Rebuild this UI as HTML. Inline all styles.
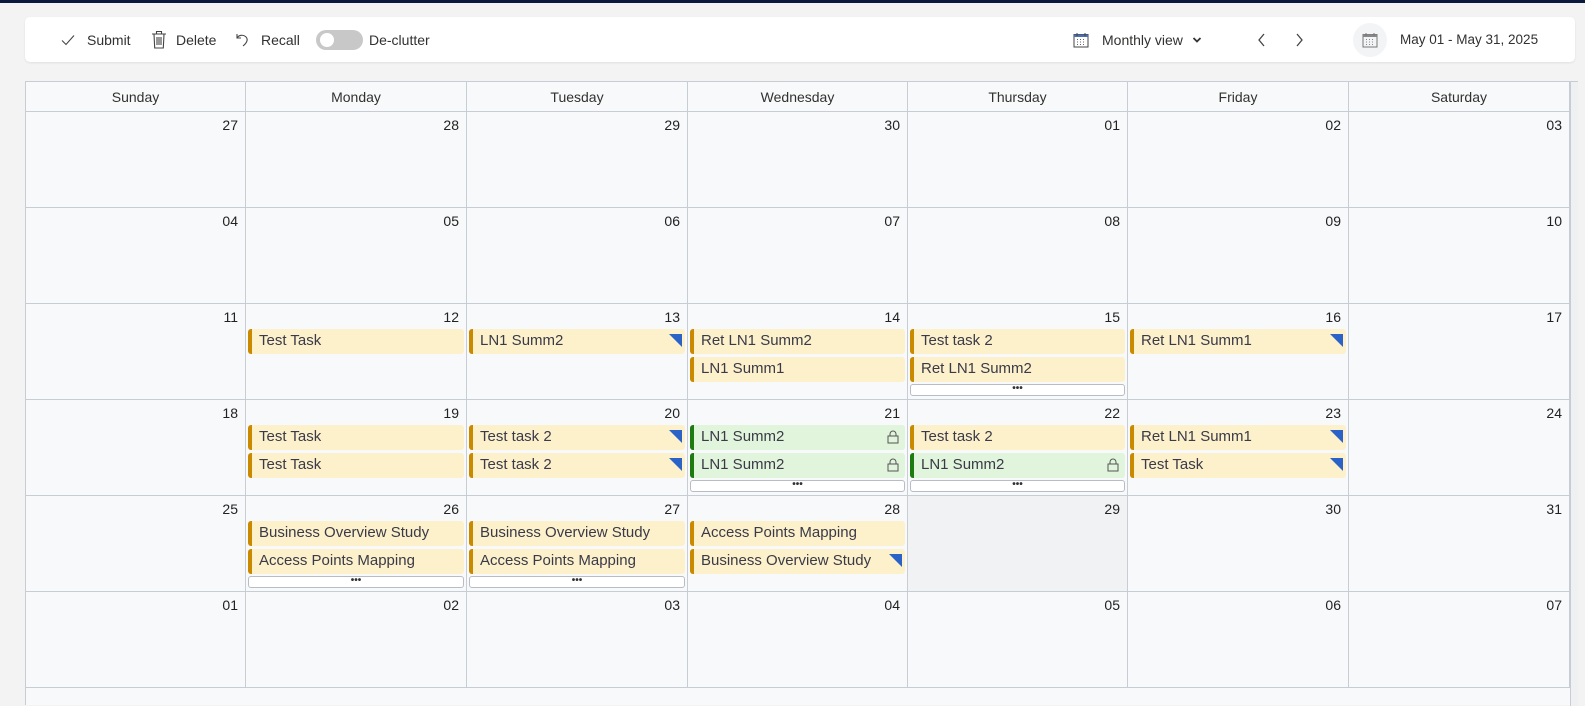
<!DOCTYPE html>
<html><head><meta charset="utf-8"><style>
*{box-sizing:border-box;margin:0;padding:0}
body{width:1585px;height:705px;background:#f3f3f3;font-family:"Liberation Sans",sans-serif;color:#323130;position:relative;overflow:hidden}
.topbar{position:absolute;left:0;top:0;width:1585px;height:3px;background:#0b1a3c}
.tb{position:absolute;left:25px;top:17px;width:1550px;height:45px;background:#fff;border-radius:5px;box-shadow:0 1px 2px rgba(0,0,0,.08)}
.ti{position:absolute;top:0;height:45px;display:flex;align-items:center;font-size:14px;color:#323130}
.grid{position:absolute;left:25px;top:81px;width:1553px;height:624px;border:1px solid #c8ccd4;border-bottom:none;background:#f8f9fb}
.sb{position:absolute;left:1544px;top:0;width:8px;height:624px;background:#eff0f2;border-left:1px solid #c8ccd4}
.hd{position:absolute;top:0;height:30px;border-right:1px solid #c8ccd4;border-bottom:1px solid #c8ccd4;font-size:14px;text-align:center;line-height:30px;background:#f8f9fb}
.cell{position:absolute;border-right:1px solid #c8ccd4;border-bottom:1px solid #c8ccd4;background:#f8f9fb}
.num{position:absolute;right:7px;top:5px;font-size:14px;color:#222}
.ev{position:absolute;left:2px;right:2px;height:25px;background:#fdf1cc;border-left:4px solid #c98a00;border-radius:3px;font-size:15px;line-height:24px;padding-left:7px;color:#3a3a48;overflow:hidden;white-space:nowrap}
.ev.g{background:#e1f4dc;border-left-color:#1e7b10}
.tri{position:absolute;right:3px;top:5px;width:0;height:0;border-top:13px solid #2a62c8;border-left:13px solid transparent}
.lock{position:absolute;right:6px;top:5px}
.more{position:absolute;left:2px;right:2px;height:12px;background:#fff;border:1px solid #b8bcc4;border-radius:3px;font-size:10px;line-height:8px;text-align:center;color:#333;font-weight:bold}
</style></head><body>
<div class="topbar"></div>
<div class="tb">
 <div class="ti" style="left:35px"><svg width="16" height="16" viewBox="0 0 16 16"><path d="M2 8.5l4 4 8-9" fill="none" stroke="#444" stroke-width="1.1"/></svg><span style="margin-left:11px">Submit</span></div>
 <div class="ti" style="left:126px"><svg width="16" height="20" viewBox="0 0 16 20"><path d="M1 4h14M5.5 4V1.5h5V4M3 4l.7 14h8.6L13 4M6 7v8M8 7v8M10 7v8" fill="none" stroke="#444" stroke-width="1.1"/></svg><span style="margin-left:9px">Delete</span></div>
 <div class="ti" style="left:211px"><svg width="14" height="16" viewBox="0 0 14 16"><path d="M1 2v4h4M1.5 5.5C3 3 7 2.5 9.5 4.5S12 10 7 14" fill="none" stroke="#444" stroke-width="1.1"/></svg><span style="margin-left:11px">Recall</span></div>
 <div class="ti" style="left:291px"><div style="width:47px;height:20px;border-radius:10px;background:#c8c8c8;position:relative"><div style="position:absolute;left:4px;top:3px;width:14px;height:14px;border-radius:50%;background:#fff"></div></div><span style="margin-left:6px">De-clutter</span></div>
 <div class="ti" style="left:1048px"><svg width="16" height="16" viewBox="0 0 16 16"><rect x="1" y="2.5" width="14" height="12.5" fill="none" stroke="#444"/><rect x="1" y="2.5" width="14" height="2.5" fill="#4a6fb5"/><path d="M4 1v3M12 1v3" stroke="#444"/><path d="M4 7.5h1M7 7.5h1M10 7.5h1M4 10h1M7 10h1M10 10h1M4 12.5h1M7 12.5h1M10 12.5h1" stroke="#666"/></svg><span style="margin-left:13px">Monthly view</span><svg style="margin-left:9px" width="10" height="8" viewBox="0 0 10 8"><path d="M1.5 2l3.5 3.5L8.5 2" fill="none" stroke="#333" stroke-width="1.8"/></svg></div>
 <div class="ti" style="left:1232px"><svg width="10" height="14" viewBox="0 0 10 14"><path d="M7 1L2 7l5 6" fill="none" stroke="#444" stroke-width="1.3"/></svg></div>
 <div class="ti" style="left:1269px"><svg width="10" height="14" viewBox="0 0 10 14"><path d="M3 1l5 6-5 6" fill="none" stroke="#444" stroke-width="1.3"/></svg></div>
 <div style="position:absolute;left:1328px;top:6px;width:34px;height:34px;border-radius:50%;background:#f3f4f6"></div>
 <div class="ti" style="left:1337px"><svg width="16" height="16" viewBox="0 0 16 16"><rect x="1" y="2.5" width="14" height="12.5" fill="none" stroke="#777"/><rect x="1" y="2.5" width="14" height="2.5" fill="#888"/><path d="M4 1v3M12 1v3" stroke="#777"/><path d="M4 7.5h1M7 7.5h1M10 7.5h1M4 10h1M7 10h1M10 10h1M4 12.5h1M7 12.5h1M10 12.5h1" stroke="#888"/></svg></div>
 <div class="ti" style="left:1375px;font-size:13.5px">May 01 - May 31, 2025</div>
</div>
<div class="grid" id="g"></div>
<script>
var g=document.getElementById('g');
var xs=[0,220,441,662,882,1102,1323,1544];
var days=['Sunday','Monday','Tuesday','Wednesday','Thursday','Friday','Saturday'];
var h='<div class="sb"></div>';
for(var i=0;i<7;i++)h+='<div class="hd" style="left:'+xs[i]+'px;width:'+(xs[i+1]-xs[i])+'px">'+days[i]+'</div>';
var nums=[[27,28,29,30,'01','02','03'],['04','05','06','07','08','09',10],[11,12,13,14,15,16,17],[18,19,20,21,22,23,24],[25,26,27,28,29,30,31],['01','02','03','04','05','06','07']];
var T='<span class="tri"></span>',L='<svg class="lock" width="12" height="14" viewBox="0 0 12 14"><path d="M3 6V4a3 3 0 0 1 6 0v2" fill="none" stroke="#555"/><rect x="1" y="6" width="10" height="7" fill="none" stroke="#555"/></svg>';
var ev={
'2,1':[['Test Task']],'2,2':[['LN1 Summ2',T]],'2,3':[['Ret LN1 Summ2'],['LN1 Summ1']],'2,4':[['Test task 2'],['Ret LN1 Summ2'],1],'2,5':[['Ret LN1 Summ1',T]],
'3,1':[['Test Task'],['Test Task']],'3,2':[['Test task 2',T],['Test task 2',T]],'3,3':[['LN1 Summ2',L,1],['LN1 Summ2',L,1],1],'3,4':[['Test task 2'],['LN1 Summ2',L,1],1],'3,5':[['Ret LN1 Summ1',T],['Test Task',T]],
'4,1':[['Business Overview Study'],['Access Points Mapping'],1],'4,2':[['Business Overview Study'],['Access Points Mapping'],1],'4,3':[['Access Points Mapping'],['Business Overview Study',T]]};
for(var r=0;r<6;r++)for(var c=0;c<7;c++){
 var y=30+r*96;
 var bg=(r==4&&c==4)?'background:#f1f2f4;':'';
 h+='<div class="cell" style="'+bg+'left:'+xs[c]+'px;top:'+y+'px;width:'+(xs[c+1]-xs[c])+'px;height:96px"><span class="num">'+nums[r][c]+'</span>';
 var e=ev[r+','+c];
 if(e){for(var k=0;k<e.length;k++){
  if(e[k]===1){h+='<div class="more" style="top:80px">•••</div>';continue;}
  var it=e[k];
  h+='<div class="ev'+(it[2]?' g':'')+'" style="top:'+(25+k*28)+'px">'+it[0]+(it[1]||'')+'</div>';
 }}
 h+='</div>';
}
g.innerHTML=h;
</script>
</body></html>
